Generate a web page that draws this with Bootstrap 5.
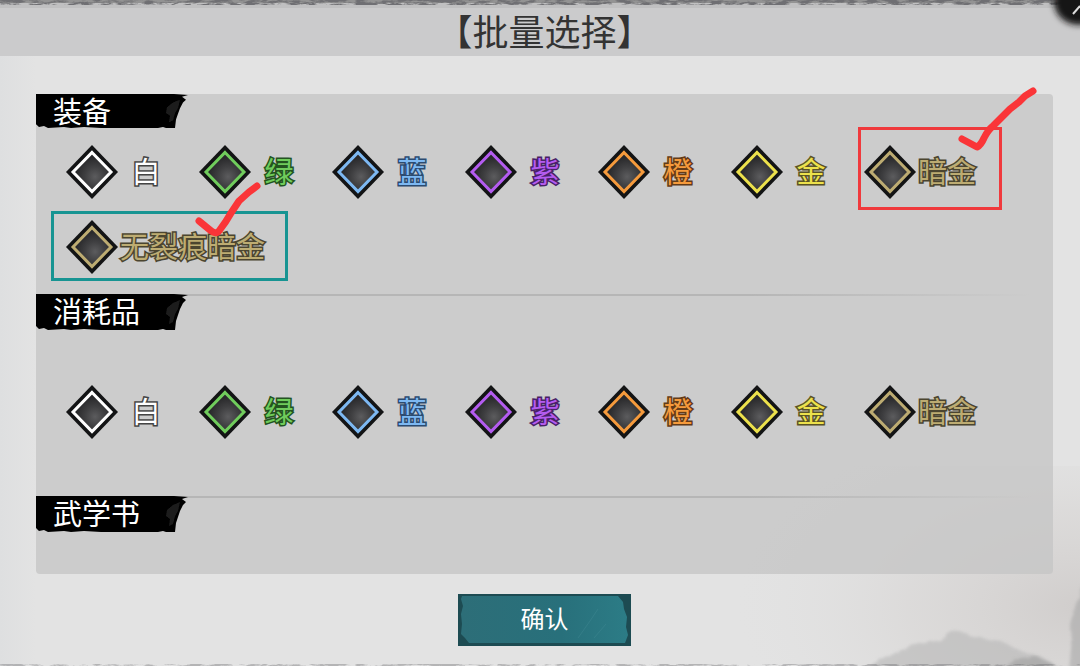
<!DOCTYPE html>
<html lang="zh-CN">
<head>
<meta charset="utf-8">
<meta name="viewport" content="width=device-width, initial-scale=1">
<title>批量选择</title>
<link href="https://cdn.jsdelivr.net/npm/bootstrap@5.3.0/dist/css/bootstrap.min.css" rel="stylesheet">
<style>
body{background:#e2e2e2;font-family:"Noto Sans CJK SC",sans-serif;color:#333}
.dialog-shell{background:linear-gradient(90deg,#dedfe0 0,#e3e3e3 36px);isolation:isolate}
.ink-art{z-index:-1;pointer-events:none}
.title-bar{background:#cbcbcc;height:56px;padding:8px 27px 0 36px}
.title-bar h1{font-size:36px;line-height:44px}
.dialog-body{padding:38px 27px 20px 36px}
.panel-box{background:rgba(197,197,197,.8);border-radius:4px}
.ribbon{width:154px;height:36px;padding-left:17px}
.ribbon h2{font-size:29px;line-height:32px;color:#fff}
.ribbon-short{height:34px}
.ribbon svg{z-index:-1}
.ruled-top{background:linear-gradient(90deg,#b6b6b6 70%,transparent 98%) 0 0/100% 2px no-repeat}
.options{display:grid;grid-template-columns:repeat(7,minmax(0,1fr));row-gap:21px;padding:17px 56px 20px 30px}
.options-tall{padding-top:55px;padding-bottom:57px}
.span-two{grid-column:span 2}
.option{cursor:pointer;gap:2px;height:54px}
.option svg.gem{width:52px;height:54px;color:var(--tone)}
.option-name{min-width:52px;padding-bottom:4px;font-size:29px;line-height:50px;font-weight:400;color:var(--tone);-webkit-text-stroke:3px var(--edge);paint-order:stroke fill}
.option input:focus-visible+svg{outline:2px solid #168f8d}
.t-white{--tone:#fff;--edge:#444}
.t-green{--tone:#70cc5c;--edge:#24531f}
.t-blue{--tone:#7db8f2;--edge:#2c4b70}
.t-purple{--tone:#b45cf0;--edge:#482266}
.t-orange{--tone:#f59a3c;--edge:#633b18}
.t-gold{--tone:#ece14c;--edge:#5a5326}
.t-dark{--tone:#bdac72;--edge:#4b4530}
.frame-red{border:3px solid #f0393c;inset:-18px -5px -11px -6px}
.frame-teal{border:3px solid #179492;inset:-9px auto -7px -15px;width:237px}
.tick{fill:none;stroke:#fa3538;stroke-width:7;stroke-linecap:round;stroke-linejoin:round;overflow:visible}
.tick-red{right:-37px;top:-56px}
.tick-teal{left:130px;top:-37px}
.martial{min-height:78px}
.confirm{width:173px;height:52px;margin-top:20px;font-size:24px;color:#fff}
.confirm:hover,.confirm:active{color:#fff!important}
.confirm svg{z-index:-1}
</style>
<script src="https://cdn.jsdelivr.net/npm/bootstrap@5.3.0/dist/js/bootstrap.bundle.min.js"></script>
</head>
<body>
<svg width="0" height="0" class="position-absolute" aria-hidden="true">
  <defs>
    <radialGradient id="stone" cx=".58" cy=".62" r=".5"><stop offset="0" stop-color="#5c5c5e"/><stop offset=".5" stop-color="#404042"/><stop offset="1" stop-color="#29292b"/></radialGradient>
    <linearGradient id="teal"><stop offset="0" stop-color="#2d6e78"/><stop offset=".6" stop-color="#28707b"/><stop offset="1" stop-color="#2c7c86"/></linearGradient>
    <filter id="soft" x="-30%" y="-30%" width="160%" height="160%"><feGaussianBlur stdDeviation="3"/></filter>
    <filter id="edge-soft" x="-10%" y="-20%" width="120%" height="140%"><feGaussianBlur stdDeviation=".5"/></filter>
    <radialGradient id="mist" cx="1" cy=".7" r=".95"><stop offset="0" stop-color="#c4bfbd" stop-opacity=".6"/><stop offset=".5" stop-color="#cfcbc9" stop-opacity=".35"/><stop offset="1" stop-color="#dddddd" stop-opacity="0"/></radialGradient>
    <filter id="rough" x="-10%" y="-10%" width="120%" height="120%"><feTurbulence type="fractalNoise" baseFrequency=".08" numOctaves="3" seed="4"/><feDisplacementMap in="SourceGraphic" scale="7"/><feGaussianBlur stdDeviation="1.500"/></filter>
    <filter id="grain" x="0" y="0" width="100%" height="100%"><feTurbulence type="fractalNoise" baseFrequency=".09 .35" numOctaves="4" seed="8"/><feColorMatrix values="0 0 0 0 .16  0 0 0 0 .16  0 0 0 0 .17  4 0 0 0 -1.5"/></filter>
    <symbol id="gem" viewBox="0 0 52 54"><path d="M26 0 52 27 26 54 0 27Z" fill="#131415"/><path d="M26 7.500 45 27 26 46.500 7 27Z" fill="url(#stone)" stroke="currentColor" stroke-width="3"/></symbol>
    <symbol id="brush" viewBox="0 0 154 36" preserveAspectRatio="none"><path d="M0 0H138L152 1 146 3 150 6 147 9 144 15 142 21 140 27 139 36 130 36 127 35 122 36 65 36 48 35 35 36 28 35 12 36 8 34 3 35 0 32Z" fill="#000" filter="url(#edge-soft)"/><path d="m144 6-7 3-6 5-1 6 4 3-1 7 4-2 2-8 3-5Z" fill="#1d1d1d" filter="url(#edge-soft)"/></symbol>
  </defs>
</svg>

<div class="dialog-shell position-relative min-vh-100 overflow-hidden d-flex flex-column">
  <svg class="ink-art position-absolute bottom-0 end-0" width="360" height="200" viewBox="0 0 360 200" aria-hidden="true">
    <rect width="360" height="200" fill="url(#mist)"/>
    <path d="M145 204 175 187 190 180 220 174 237 165 255 171 280 175 300 185 320 190 345 206Z" fill="#b8b8b8" opacity=".6" filter="url(#rough)"/>
    <path d="M284 204 300 192 318 191 345 206Z" fill="#999" opacity=".5" filter="url(#rough)"/>
    <path d="M370 108 360 124 354 145 350 158 352 172 349 206H370Z" fill="#a9a9a9" opacity=".6" filter="url(#rough)"/>
  </svg>
  <svg class="position-absolute bottom-0 start-0 w-100" height="2" aria-hidden="true"><rect width="100%" height="2" filter="url(#grain)" opacity=".4"/></svg>

  <header class="title-bar position-relative text-center">
    <svg class="position-absolute top-0 start-0 w-100" height="12" aria-hidden="true"><rect width="100%" height="8" fill="#a8a8aa" opacity=".3"/><rect width="100%" height="3" fill="#666" opacity=".5"/><rect width="100%" height="5" filter="url(#grain)"/></svg>
    <svg class="position-absolute top-0 end-0" width="40" height="40" viewBox="0 0 40 40" aria-hidden="true"><ellipse cx="39" cy="2" rx="25" ry="23" fill="#161313" filter="url(#soft)"/><path d="m33 14 7-8" stroke="#ddd" stroke-width="2"/></svg>
    <h1 class="m-0 fw-normal position-relative">【批量选择】</h1>
  </header>

  <main class="dialog-body d-flex flex-column">
    <div class="panel-box">
      <section>
        <div class="ribbon ribbon-short position-relative z-0"><svg class="position-absolute top-0 start-0 w-100 h-100" aria-hidden="true"><use href="#brush"/></svg><h2 class="m-0 fw-normal">装备</h2></div>
        <div class="options">
          <label class="option d-flex align-items-center t-white"><input class="visually-hidden" type="checkbox"><svg class="gem flex-shrink-0" aria-hidden="true"><use href="#gem"/></svg><span class="option-name text-center text-nowrap">白</span></label>
          <label class="option d-flex align-items-center t-green"><input class="visually-hidden" type="checkbox"><svg class="gem flex-shrink-0" aria-hidden="true"><use href="#gem"/></svg><span class="option-name text-center text-nowrap">绿</span></label>
          <label class="option d-flex align-items-center t-blue"><input class="visually-hidden" type="checkbox"><svg class="gem flex-shrink-0" aria-hidden="true"><use href="#gem"/></svg><span class="option-name text-center text-nowrap">蓝</span></label>
          <label class="option d-flex align-items-center t-purple"><input class="visually-hidden" type="checkbox"><svg class="gem flex-shrink-0" aria-hidden="true"><use href="#gem"/></svg><span class="option-name text-center text-nowrap">紫</span></label>
          <label class="option d-flex align-items-center t-orange"><input class="visually-hidden" type="checkbox"><svg class="gem flex-shrink-0" aria-hidden="true"><use href="#gem"/></svg><span class="option-name text-center text-nowrap">橙</span></label>
          <label class="option d-flex align-items-center t-gold"><input class="visually-hidden" type="checkbox"><svg class="gem flex-shrink-0" aria-hidden="true"><use href="#gem"/></svg><span class="option-name text-center text-nowrap">金</span></label>
          <label class="option d-flex align-items-center t-dark position-relative"><input class="visually-hidden" type="checkbox"><svg class="gem flex-shrink-0" aria-hidden="true"><use href="#gem"/></svg><span class="option-name text-center text-nowrap">暗金</span>
            <span class="frame-red position-absolute"></span>
            <svg class="tick tick-red position-absolute" width="76" height="62" viewBox="0 0 76 62" aria-hidden="true"><path d="m4 50 15 8q4-2 7-9 4-8 9-12l8-8 9-9 9-7 6-6 8-5"/></svg></label>
          <label class="option d-flex align-items-center t-dark position-relative span-two"><input class="visually-hidden" type="checkbox"><svg class="gem flex-shrink-0" aria-hidden="true"><use href="#gem"/></svg><span class="option-name text-center text-nowrap">无裂痕暗金</span>
            <span class="frame-teal position-absolute"></span>
            <svg class="tick tick-teal position-absolute" width="64" height="54" viewBox="0 0 64 54" aria-hidden="true"><path d="m3 38 11 9q6 5 9 1 7-9 12-18l8-12 10-9 8-6"/></svg></label>
        </div>
      </section>

      <section class="ruled-top">
        <div class="ribbon position-relative z-0"><svg class="position-absolute top-0 start-0 w-100 h-100" aria-hidden="true"><use href="#brush"/></svg><h2 class="m-0 fw-normal">消耗品</h2></div>
        <div class="options options-tall">
          <label class="option d-flex align-items-center t-white"><input class="visually-hidden" type="checkbox"><svg class="gem flex-shrink-0" aria-hidden="true"><use href="#gem"/></svg><span class="option-name text-center text-nowrap">白</span></label>
          <label class="option d-flex align-items-center t-green"><input class="visually-hidden" type="checkbox"><svg class="gem flex-shrink-0" aria-hidden="true"><use href="#gem"/></svg><span class="option-name text-center text-nowrap">绿</span></label>
          <label class="option d-flex align-items-center t-blue"><input class="visually-hidden" type="checkbox"><svg class="gem flex-shrink-0" aria-hidden="true"><use href="#gem"/></svg><span class="option-name text-center text-nowrap">蓝</span></label>
          <label class="option d-flex align-items-center t-purple"><input class="visually-hidden" type="checkbox"><svg class="gem flex-shrink-0" aria-hidden="true"><use href="#gem"/></svg><span class="option-name text-center text-nowrap">紫</span></label>
          <label class="option d-flex align-items-center t-orange"><input class="visually-hidden" type="checkbox"><svg class="gem flex-shrink-0" aria-hidden="true"><use href="#gem"/></svg><span class="option-name text-center text-nowrap">橙</span></label>
          <label class="option d-flex align-items-center t-gold"><input class="visually-hidden" type="checkbox"><svg class="gem flex-shrink-0" aria-hidden="true"><use href="#gem"/></svg><span class="option-name text-center text-nowrap">金</span></label>
          <label class="option d-flex align-items-center t-dark"><input class="visually-hidden" type="checkbox"><svg class="gem flex-shrink-0" aria-hidden="true"><use href="#gem"/></svg><span class="option-name text-center text-nowrap">暗金</span></label>
        </div>
      </section>

      <section class="ruled-top martial">
        <div class="ribbon position-relative z-0"><svg class="position-absolute top-0 start-0 w-100 h-100" aria-hidden="true"><use href="#brush"/></svg><h2 class="m-0 fw-normal">武学书</h2></div>
      </section>
    </div>

    <button type="button" class="confirm btn border-0 rounded-0 px-0 pt-0 pb-1 align-self-center position-relative z-0">
      <svg class="position-absolute top-0 start-0 w-100 h-100" viewBox="0 0 173 52" preserveAspectRatio="none" aria-hidden="true"><rect width="173" height="52" fill="#1d4b52"/><path d="M4 2H160l5 6 1 7 3 8-1 10 2 8-3 8H11l-4-5-4-4 1-10-1-10 2-8-2-7Z" fill="url(#teal)"/><path d="m120 44 12-17 8-12m-4 29 12-14" stroke="#4b929a" stroke-width="1" fill="none" opacity=".3"/></svg>确认</button>
  </main>
</div>
</body>
</html>
